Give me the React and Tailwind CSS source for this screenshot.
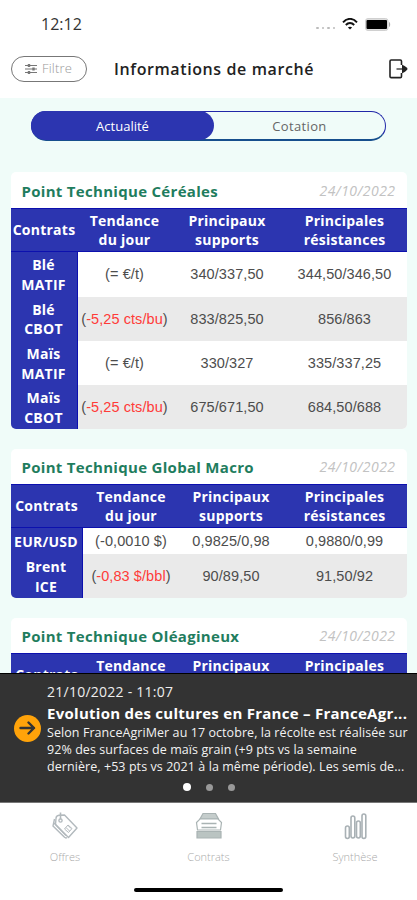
import React from "react";

const TABLES = [
  {
    title: "Point Technique Céréales",
    height: "h-[257px]",
    titleHeight: "h-9",
    columns: "grid-cols-[67px_94px_111px_124px]",
    rows: [
      { name: ["Blé", "MATIF"], trend: "= €/t", supports: "340/337,50", resist: "344,50/346,50", height: "h-[44.5px]" },
      { name: ["Blé", "CBOT"], trend: "-5,25 cts/bu", down: true, supports: "833/825,50", resist: "856/863", height: "h-[44.5px]" },
      { name: ["Maïs", "MATIF"], trend: "= €/t", supports: "330/327", resist: "335/337,25", height: "h-11" },
      { name: ["Maïs", "CBOT"], trend: "-5,25 cts/bu", down: true, supports: "675/671,50", resist: "684,50/688", height: "h-11" },
    ],
  },
  {
    title: "Point Technique Global Macro",
    height: "h-[149px]",
    titleHeight: "h-[35px]",
    columns: "grid-cols-[72px_97px_103px_124px]",
    rows: [
      { name: ["EUR/USD"], trend: "-0,0010 $", supports: "0,9825/0,98", resist: "0,9880/0,99", height: "h-[26px]" },
      { name: ["Brent", "ICE"], trend: "-0,83 $/bbl", down: true, supports: "90/89,50", resist: "91,50/92", height: "h-11" },
    ],
  },
  {
    title: "Point Technique Oléagineux",
    height: "h-[120px]",
    titleHeight: "h-[35px]",
    columns: "grid-cols-[72px_97px_103px_124px]",
    rows: [],
  },
];

function Head({ lines }) {
  return (
    <div className="flex flex-col items-center justify-center whitespace-nowrap text-center font-['Open_Sans',sans-serif] text-[14px] font-bold leading-[19.5px] tracking-[0.25px] text-white">
      {lines.map((l) => (
        <span key={l}>{l}</span>
      ))}
    </div>
  );
}

function Value({ children }) {
  return (
    <div className="flex items-center justify-center whitespace-nowrap pt-0.5 font-['Liberation_Sans',sans-serif] text-[14.5px] tracking-[0.08px] text-[#4d4d4d]">
      {children}
    </div>
  );
}

function Table({ table }) {
  return (
    <section className={`mx-auto w-[396px] shrink-0 overflow-hidden rounded-[5px] bg-white ${table.height}`}>
      <div className={`flex items-center justify-between pl-[11px] pr-[11px] pt-0.5 ${table.titleHeight}`}>
        <h2 className="whitespace-nowrap text-[15px] font-bold tracking-[0.3px] text-[#1f7d5e]">{table.title}</h2>
        <span className="-mt-0.5 text-[14px] font-medium italic tracking-[0.45px] text-[#c2c2c2]">24/10/2022</span>
      </div>
      <div className={`grid h-11 border-y border-[#0c10ae] bg-[#2c35b0] ${table.columns}`}>
        <Head lines={["Contrats"]} />
        <Head lines={["Tendance", "du jour"]} />
        <Head lines={["Principaux", "supports"]} />
        <Head lines={["Principales", "résistances"]} />
      </div>
      {table.rows.map((row, i) => (
        <div key={i} className={`grid ${row.height} ${table.columns} ${i % 2 ? "bg-[#eaeaea]" : "bg-white"}`}>
          <div className="grid border-r border-[#0c10ae] bg-[#2c35b0] pt-px">
            <Head lines={row.name} />
          </div>
          <Value>
            (<span className={row.down ? "text-[#ff3b38]" : ""}>{row.trend}</span>)
          </Value>
          <Value>{row.supports}</Value>
          <Value>{row.resist}</Value>
        </div>
      ))}
    </section>
  );
}

function StatusBar() {
  return (
    <div className="flex h-12 items-center justify-between pl-[41px] pr-[26px]">
      <span className="text-[16px] font-medium text-[#333]">12:12</span>
      <div className="flex items-center">
        <div className="mr-[7px] mt-2 flex gap-[3px]">
          {[0, 1, 2, 3].map((n) => (
            <i key={n} className="size-[2.5px] rounded-full bg-[#bbb]" />
          ))}
        </div>
        <svg width="16" height="12" viewBox="0 0 16 12" fill="none" stroke="#111" strokeWidth="1.9">
          <path d="M1 4.3C5-.3 11-.3 15 4.3M3.8 7c2.5-2.6 5.9-2.6 8.4 0" />
          <path d="M8 11.6 5.9 9.5c1.2-1.1 3-1.1 4.2 0z" fill="#111" stroke="none" />
        </svg>
        <svg className="ml-[7px]" width="26" height="13" viewBox="0 0 26 13">
          <rect x=".5" y=".5" width="22.5" height="12" rx="2.5" fill="#ddd" stroke="#d0d0d0" />
          <rect x="1.5" y="2" width="20.5" height="9" rx="1" fill="#000" />
          <path d="M24 4v5c1.600-.6 1.600-4.400 0-5z" fill="#aaa" />
        </svg>
      </div>
    </div>
  );
}

function Header() {
  return (
    <div className="flex h-[50px] items-center pl-[11px] pr-[9px] pb-[9px]">
      <button className="flex h-[26px] w-[76px] items-center rounded-full border border-[#777] pl-[13px] text-[13px] font-light tracking-[0.2px] text-[#999]">
        <svg className="mr-[5px]" width="12" height="10" viewBox="0 0 12 10" stroke="#777" strokeWidth="1.2">
          <path d="M0 1.5h12M0 5h12M0 8.5h12" />
          <path d="M4 0v3M8.500 3.500v3M4 7v3" strokeWidth="2.4" />
        </svg>
        Filtre
      </button>
      <h1 className="ml-[27px] whitespace-nowrap text-[16px] font-semibold tracking-[0.6px] text-[#222]">Informations de marché</h1>
      <svg className="ml-auto" width="19" height="20" viewBox="0 0 19 20" fill="none" stroke="#222" strokeWidth="1.6">
        <path d="M12.500 6V2.200c0-.8-.3-1.200-1.200-1.200H2.200C1.400 1 1 1.400 1 2.200v15.200c0 .8.400 1.200 1.200 1.200h9.100c.9 0 1.200-.4 1.200-1.200V14" />
        <path d="M7.500 10H14" stroke="#777" strokeWidth="2" />
        <path d="M13 5.800c2.500.8 4.500 2.300 5.700 4.200-1.200 1.900-3.200 3.400-5.700 4.200z" fill="#222" stroke="none" />
      </svg>
    </div>
  );
}

function News() {
  return (
    <div className="flex h-[130px] shrink-0 flex-col border-b border-t border-b-[#777] border-t-black bg-[#333] text-white">
      <div className="flex h-[101px] items-center pl-[14px]">
        <div className="mt-[7px] flex size-[27px] shrink-0 items-center justify-center rounded-full bg-[#ffa30a]">
          <svg width="17" height="14" viewBox="0 0 17 14" fill="none" stroke="#333" strokeWidth="2.4" strokeLinecap="round" strokeLinejoin="round">
            <path d="M1.500 7h13.500M9.500 1.500 15 7l-5.500 5.500" />
          </svg>
        </div>
        <div className="ml-[6px] mt-[8px] whitespace-nowrap">
          <div className="text-[14px] leading-5 tracking-[0.25px] text-[#eee]">21/10/2022 - 11:07</div>
          <div className="text-[15px] font-bold leading-[22px] tracking-[0.27px]">Evolution des cultures en France – FranceAgr...</div>
          <div className="text-[12.5px] leading-[17px] tracking-[0.07px] text-[#f2f2f2]">
            <div>Selon FranceAgriMer au 17 octobre, la récolte est réalisée sur</div>
            <div>92% des surfaces de maïs grain (+9 pts vs la semaine</div>
            <div>dernière, +53 pts vs 2021 à la même période). Les semis de...</div>
          </div>
        </div>
      </div>
      <div className="mt-[8px] flex items-center justify-center gap-[15px]">
        <i className="size-[8px] rounded-full bg-white" />
        <i className="size-[7px] rounded-full bg-[#999]" />
        <i className="size-[7px] rounded-full bg-[#999]" />
      </div>
    </div>
  );
}

function Nav() {
  const label = "text-[11px] font-light leading-4 text-[#aaa]";
  return (
    <div className="h-[97px] bg-white">
      <div className="grid h-[67px] grid-cols-[130px_157px_130px] pt-[9px]">
        <div className="flex flex-col items-center gap-[9px]">
          <svg width="28" height="28" viewBox="0 0 28 28" fill="none" stroke="#b2b9bd" strokeWidth="1.4">
            <path d="M5 6.500C5 4.500 6 3.500 8 3.300L13.500 3 26 16 17.500 25.500 4.500 12.500z" strokeLinejoin="round" />
            <path d="M3.500 7 2 14 13.500 25.300c.8.700 1.600.9 2.500.2M2.600 10.500 15 23.500" />
            <path d="m13.500 17 3.500-4 4 3.500-3.500 4zM15 15.500l3.500 3.500M17 13.500l3 3" strokeWidth="1" />
            <path d="M9.500.5v7" strokeWidth="1.600" />
            <circle cx="9.500" cy="8.500" r="1.600" />
          </svg>
          <span className={label}>Offres</span>
        </div>
        <div className="flex flex-col items-center gap-[9px]">
          <svg className="ml-px" width="28" height="28" viewBox="0 0 28 28" fill="none" stroke="#a9b3b3" strokeWidth="1.2">
            <path d="M8 1.500h12.500l3 5.500H5z" fill="#c5cdcc" />
            <path d="M5 7h18l3.500 3.500L25.500 18h-23L1.500 10.500z" fill="#fff" />
            <path d="M6.500 11.500h15M6.500 15.500h15" strokeWidth="1.700" />
            <path d="M2 19.500h24v6.500H2z" fill="#bac4c2" />
          </svg>
          <span className={label}>Contrats</span>
        </div>
        <div className="flex flex-col items-center gap-[9px]">
          <svg className="ml-[7px]" width="24" height="28" viewBox="0 0 24 28" fill="none" stroke="#a9b1b5" strokeWidth="1.6">
            <rect x="1.500" y="14" width="3.800" height="12.500" rx="1.900" />
            <rect x="7" y="4" width="3.800" height="22" rx="1.900" />
            <rect x="12.500" y="9" width="3.800" height="17" rx="1.900" />
            <rect x="18" y="2" width="3.800" height="24.500" rx="1.900" />
          </svg>
          <span className={`${label} ml-[6px]`}>Synthèse</span>
        </div>
      </div>
      <div className="mx-auto mt-[18px] h-[4px] w-[149px] rounded-full bg-black" />
    </div>
  );
}

export default function App() {
  return (
    <div className="flex h-[900px] w-[417px] flex-col overflow-hidden bg-[#f0fcf9] font-['Open_Sans',sans-serif]">
      <div className="h-[98px] shrink-0 bg-white">
        <StatusBar />
        <Header />
      </div>
      <div className="flex h-[575px] shrink-0 flex-col overflow-hidden pt-[13px]">
        <div className="ml-[31px] flex h-[30px] w-[355px] shrink-0 rounded-full border-[1.5px] border-b-2 border-[#2127a8] border-b-[#164f8d] text-[13px]">
          <div className="-my-px -ml-px flex w-[183px] items-center justify-center rounded-full bg-[#2c35b0] pt-[3px] font-medium text-white">Actualité</div>
          <div className="flex flex-1 items-center justify-center pt-[3px] tracking-[0.35px] text-[#666]">Cotation</div>
        </div>
        <div className="mt-[31px] flex flex-col gap-5">
          {TABLES.map((t) => (
            <Table key={t.title} table={t} />
          ))}
        </div>
      </div>
      <News />
      <Nav />
    </div>
  );
}
